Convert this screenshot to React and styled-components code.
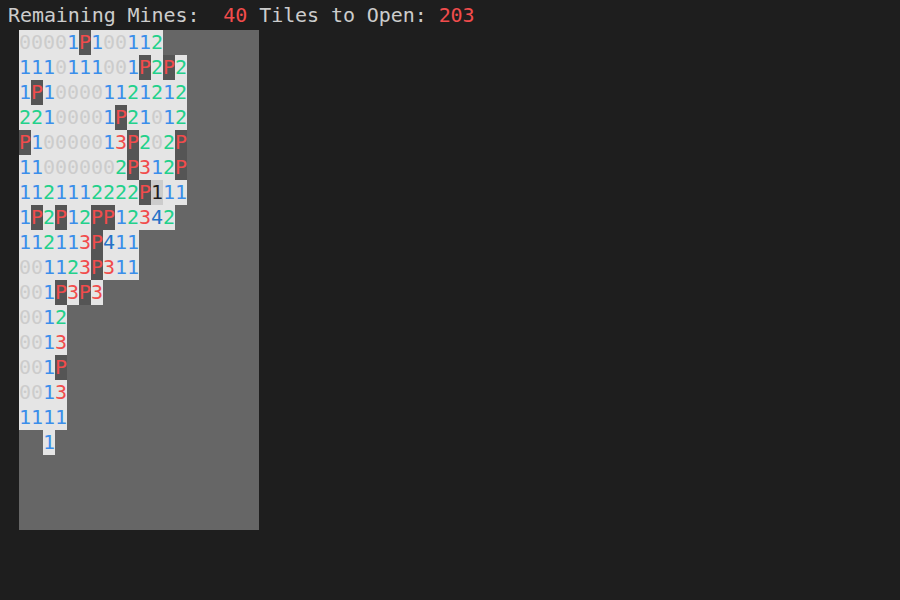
import React from "react";
import styled, { createGlobalStyle } from "styled-components";

const Global = createGlobalStyle`
  html, body { margin: 0; padding: 0; background: #1e1e1e; }
  body { font-family: "DejaVu Sans Mono", "Liberation Mono", monospace; }
`;

const Screen = styled.div`
  width: 900px;
  height: 600px;
  background: #1e1e1e;
  padding-left: 8px;
  box-sizing: border-box;
`;

const Header = styled.div`
  height: 30px;
  line-height: 30px;
  font-size: 20px;
  color: #cccccc;
  white-space: pre;
  letter-spacing: -0.08px;
`;

const Num = styled.span`
  color: #f14c4c;
`;

const Board = styled.div`
  margin-left: 11px;
  display: grid;
  grid-template-columns: repeat(20, 12px);
  grid-auto-rows: 25px;
  width: 240px;
  background: #666666;
`;

const colors = {
  "0": "#cccccc",
  "1": "#3b8eea",
  "2": "#23d18b",
  "3": "#f14c4c",
  "4": "#2472c8",
  P: "#f14c4c",
};

const Cell = styled.div`
  width: 12px;
  height: 25px;
  line-height: 25px;
  font-size: 20px;
  text-align: center;
  overflow: visible;
  white-space: pre;
  display: flex;
  justify-content: center;
  background: ${(p) =>
    p.$sel ? "#cccccc" : p.$v === "P" ? "#555555" : p.$v === " " ? "transparent" : "#e5e5e5"};
  color: ${(p) => (p.$sel ? "#1e1e1e" : colors[p.$v] || "transparent")};
`;

const rows = [
  "00001P100112",
  "1110111001P2P2",
  "1P100001121212",
  "22100001P21012",
  "P10000013P202P",
  "110000002P312P",
  "1121112222P111",
  "1P2P12PP12342",
  "112113P411",
  "001123P311",
  "001P3P3",
  "0012",
  "0013",
  "001P",
  "0013",
  "1111",
  "  1",
  "",
  "",
  "",
];

export default function App() {
  return (
    <Screen>
      <Global />
      <Header>
        Remaining Mines:  <Num>40</Num> Tiles to Open: <Num>203</Num>
      </Header>
      <Board>
        {rows.map((r, ri) =>
          Array.from({ length: 20 }, (_, ci) => {
            const v = r[ci] || " ";
            return (
              <Cell key={ri + "-" + ci} $v={v} $sel={ri === 6 && ci === 11}>
                {v === " " ? "" : v}
              </Cell>
            );
          })
        )}
      </Board>
    </Screen>
  );
}
